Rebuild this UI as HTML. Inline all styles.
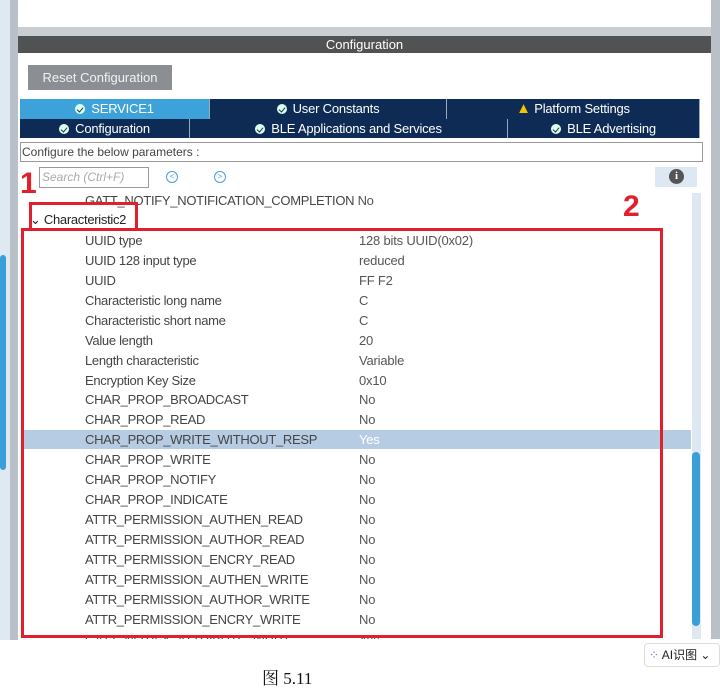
<!DOCTYPE html>
<html><head><meta charset="utf-8"><style>
*{margin:0;padding:0;box-sizing:border-box}
body{width:720px;height:689px;background:#fff;position:relative;overflow:hidden;font-family:"Liberation Sans","Noto Sans CJK SC",sans-serif;font-size:13px;color:#333}
.a{position:absolute}
.tab{position:absolute;color:#fff;font-size:13px;text-align:center;line-height:19px;border-right:1px solid #9ab;letter-spacing:-0.2px}
.ck{display:inline-block;width:10px;height:10px;border-radius:50%;background:#dfe;margin-right:6px;vertical-align:-1px;position:relative}
.ck:after{content:"";position:absolute;left:3px;top:2px;width:3px;height:5px;border:solid #234;border-width:0 1.5px 1.5px 0;transform:rotate(40deg)}
.row{position:absolute;left:85px;font-size:13px;line-height:20px;height:20px;color:#444;letter-spacing:-0.3px;white-space:nowrap}
.val{position:absolute;left:359px;font-size:13px;line-height:20px;color:#555;letter-spacing:-0.2px}
</style></head><body>
<div class="a" style="left:0;top:0;width:10px;height:640px;background:#dfe9f2"></div>
<div class="a" style="left:0;top:255px;width:6px;height:215px;background:#3a9fd8;border-radius:3px"></div>
<div class="a" style="left:10px;top:0;width:8px;height:640px;background:#b9c0c7"></div>
<div class="a" style="left:711px;top:0;width:9px;height:640px;background:#b9c0c7"></div>
<div class="a" style="left:18px;top:27px;width:693px;height:9px;background:#c9ced3"></div>
<div class="a" style="left:18px;top:36px;width:693px;height:17px;background:#505254;color:#fff;text-align:center;font-size:13px;line-height:17px">Configuration</div>
<div class="a" style="left:28px;top:65px;width:144px;height:25px;background:#8b8f94;color:#f2f2f2;font-size:13px;line-height:25px;text-align:center">Reset Configuration</div>
<div class="tab" style="left:20px;top:99px;width:190px;height:20px;background:#3ea2da"><span class="ck"></span>SERVICE1</div>
<div class="tab" style="left:210px;top:99px;width:237px;height:20px;background:#0d2b55"><span class="ck"></span>User Constants</div>
<div class="tab" style="left:447px;top:99px;width:253px;height:20px;background:#0d2b55"><span style="color:#f5c400;font-size:15px">▲</span> Platform Settings</div>
<div class="tab" style="left:20px;top:119px;width:170px;height:19px;background:#0d2b55"><span class="ck"></span>Configuration</div>
<div class="tab" style="left:190px;top:119px;width:318px;height:19px;background:#0d2b55"><span class="ck"></span>BLE Applications and Services</div>
<div class="tab" style="left:508px;top:119px;width:192px;height:19px;background:#0d2b55"><span class="ck"></span>BLE Advertising</div>
<div class="a" style="left:20px;top:142px;width:683px;height:20px;border:1px solid #999;font-size:12px;line-height:18px;padding-left:1px;color:#444">Configure the below parameters :</div>
<div class="a" style="left:39px;top:167px;width:110px;height:21px;border:1px solid #999;font-size:12px;font-style:italic;color:#aaa;line-height:19px;padding-left:2px">Search (Ctrl+F)</div>
<div class="a" style="left:166px;top:171px;width:12px;height:12px;border:1px solid #4a9fd0;border-radius:50%;color:#4a9fd0;font-size:8px;line-height:10px;text-align:center">&lt;</div>
<div class="a" style="left:214px;top:171px;width:12px;height:12px;border:1px solid #4a9fd0;border-radius:50%;color:#4a9fd0;font-size:8px;line-height:10px;text-align:center">&gt;</div>
<div class="a" style="left:655px;top:167px;width:42px;height:20px;background:#dce8f3"></div>
<div class="a" style="left:669px;top:169px;width:15px;height:15px;border-radius:50%;background:#555;color:#fff;font-size:11px;font-weight:bold;text-align:center;line-height:15px;font-family:'Liberation Serif',serif">i</div>
<div class="a" style="left:692px;top:193px;width:9px;height:447px;background:#dde8f2"></div>
<div class="a" style="left:692px;top:452px;width:8px;height:174px;background:#3a9fd8;border-radius:4px"></div>
<div class="a" style="left:24px;top:430px;width:667px;height:19px;background:#b6cce3"></div>
<div class="row" style="top:191px">GATT_NOTIFY_NOTIFICATION_COMPLETION <span style="color:#555">No</span></div>
<div class="row" style="left:30px;top:210px;color:#222">⌄ Characteristic2</div>
<div class="row" style="top:231px">UUID type</div><div class="val" style="top:231px">128 bits UUID(0x02)</div>
<div class="row" style="top:251px">UUID 128 input type</div><div class="val" style="top:251px">reduced</div>
<div class="row" style="top:271px">UUID</div><div class="val" style="top:271px">FF F2</div>
<div class="row" style="top:291px">Characteristic long name</div><div class="val" style="top:291px">C</div>
<div class="row" style="top:311px">Characteristic short name</div><div class="val" style="top:311px">C</div>
<div class="row" style="top:331px">Value length</div><div class="val" style="top:331px">20</div>
<div class="row" style="top:351px">Length characteristic</div><div class="val" style="top:351px">Variable</div>
<div class="row" style="top:371px">Encryption Key Size</div><div class="val" style="top:371px">0x10</div>
<div class="row" style="top:390px">CHAR_PROP_BROADCAST</div><div class="val" style="top:390px">No</div>
<div class="row" style="top:410px">CHAR_PROP_READ</div><div class="val" style="top:410px">No</div>
<div class="row" style="top:430px">CHAR_PROP_WRITE_WITHOUT_RESP</div><div class="val" style="top:430px;color:#fff">Yes</div>
<div class="row" style="top:450px">CHAR_PROP_WRITE</div><div class="val" style="top:450px">No</div>
<div class="row" style="top:470px">CHAR_PROP_NOTIFY</div><div class="val" style="top:470px">No</div>
<div class="row" style="top:490px">CHAR_PROP_INDICATE</div><div class="val" style="top:490px">No</div>
<div class="row" style="top:510px">ATTR_PERMISSION_AUTHEN_READ</div><div class="val" style="top:510px">No</div>
<div class="row" style="top:530px">ATTR_PERMISSION_AUTHOR_READ</div><div class="val" style="top:530px">No</div>
<div class="row" style="top:550px">ATTR_PERMISSION_ENCRY_READ</div><div class="val" style="top:550px">No</div>
<div class="row" style="top:570px">ATTR_PERMISSION_AUTHEN_WRITE</div><div class="val" style="top:570px">No</div>
<div class="row" style="top:590px">ATTR_PERMISSION_AUTHOR_WRITE</div><div class="val" style="top:590px">No</div>
<div class="row" style="top:610px">ATTR_PERMISSION_ENCRY_WRITE</div><div class="val" style="top:610px">No</div>
<div class="row" style="top:630px">GATT_NOTIFY_ATTRIBUTE_WRITE</div><div class="val" style="top:630px">Yes</div>
<div class="a" style="left:18px;top:639px;width:702px;height:50px;background:#fff"></div>
<div class="a" style="left:29px;top:202px;width:109px;height:28px;border:3px solid #e0202c;border-bottom:none"></div>
<div class="a" style="left:21px;top:228px;width:642px;height:410px;border:3px solid #e0202c"></div>
<div class="a" style="left:20px;top:168px;color:#e0202c;font-size:30px;font-weight:bold;line-height:32px">1</div>
<div class="a" style="left:623px;top:191px;color:#e0202c;font-size:30px;font-weight:bold;line-height:32px">2</div>
<div class="a" style="left:644px;top:643px;width:76px;height:24px;border:1px solid #ddd;border-radius:4px;font-size:12px;line-height:22px;padding-left:4px;color:#222"><span style="color:#7a5cf0">⁘</span> AI识图 ⌄</div>
<div class="a" style="left:262px;top:668px;font-family:'Liberation Serif','Noto Serif CJK SC',serif;font-size:17px;color:#111;line-height:22px">图 5.11</div>
</body></html>
